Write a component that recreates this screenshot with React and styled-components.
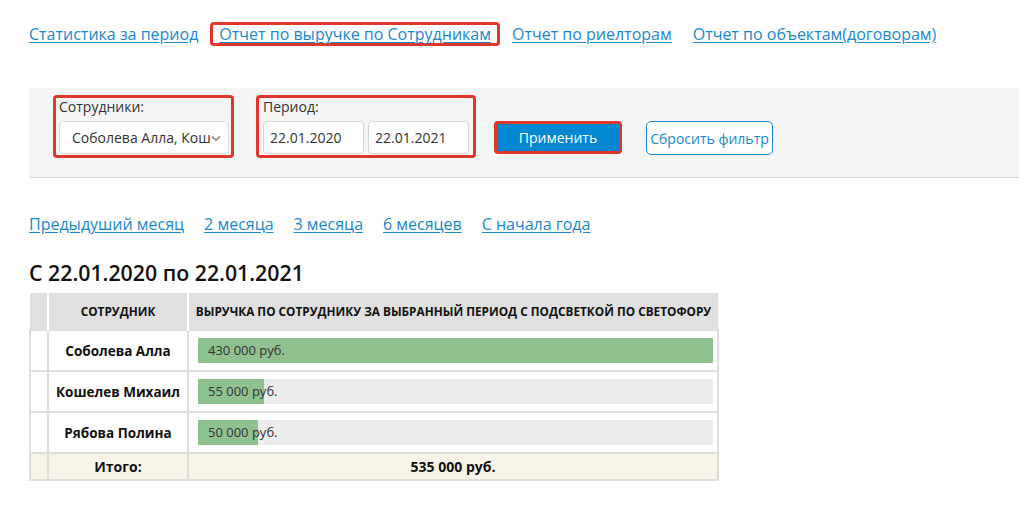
import React from "react";
import styled, { createGlobalStyle } from "styled-components";

const GlobalStyle = createGlobalStyle`
  html, body {
    margin: 0;
    padding: 0;
    background: #fff;
    font-family: "Open Sans", "Liberation Sans", sans-serif;
    color: #333;
  }
`;

const Page = styled.div`
  padding: 22px 0 0 29px;
`;

const TopNav = styled.nav`
  display: flex;
  align-items: center;
  gap: 21px;
  height: 24px;
  font-size: 16px;
`;

const NavLink = styled.a`
  color: #1c87cf;
  text-decoration: underline;
  text-underline-offset: 2px;
  white-space: nowrap;
  ${(p) =>
    p.$active &&
    `
    border: 3px solid #e0372c;
    border-radius: 4px;
    padding: 0 6px;
    margin: 0 -9px;
    line-height: 18px;
  `}
`;

const FilterPanel = styled.div`
  margin-top: 42px;
  background: #f5f5f5;
  border-bottom: 1px solid #dcdcdc;
  height: 90px;
  padding: 7px 0 0 24px;
  box-sizing: border-box;
  display: flex;
  align-items: flex-start;
`;

const Group = styled.div`
  border: 3px solid #e0372c;
  border-radius: 4px;
  padding: ${(p) => p.$pad || "0 2px 0 3px"};
  height: 63px;
  box-sizing: border-box;
  margin-right: ${(p) => p.$gap || 22}px;
`;

const Label = styled.div`
  font-size: 14px;
  color: #333;
  line-height: 18px;
  margin: 0 0 5px;
`;

const Fields = styled.div`
  display: flex;
  gap: 4px;
`;

const Field = styled.div`
  width: ${(p) => p.$w}px;
  height: 33px;
  box-sizing: border-box;
  background: #fff;
  border: 1px solid #d6d6d6;
  border-radius: 4px;
  display: flex;
  align-items: center;
  padding: 0 6px 0 ${(p) => p.$pl || 6}px;
  font-size: 14px;
  color: #333;
  overflow: hidden;
  white-space: nowrap;
`;

const SelectText = styled.span`
  flex: 1;
  overflow: hidden;
`;

const Buttons = styled.div`
  display: flex;
  gap: 24px;
  margin-top: 26px;
`;

const ApplyButton = styled.button`
  width: 128px;
  height: 33px;
  box-sizing: border-box;
  background: #0288d1;
  color: #fff;
  border: 3px solid #e0372c;
  border-radius: 4px;
  font-family: inherit;
  font-size: 14px;
`;

const ResetButton = styled.button`
  width: 127px;
  height: 34px;
  box-sizing: border-box;
  background: #fff;
  color: #1c87cf;
  border: 1px solid #1c87cf;
  border-radius: 5px;
  font-family: inherit;
  font-size: 14px;
  padding: 0;
  white-space: nowrap;
`;

const PeriodLinks = styled.div`
  display: flex;
  gap: 20px;
  margin-top: 35px;
  font-size: 16px;
`;

const Heading = styled.h2`
  margin: 23px 0 0;
  font-size: 21.3px;
  font-weight: 600;
  color: #111;
  line-height: 30px;
`;

const Table = styled.table`
  margin-top: 5px;
  border-collapse: collapse;
  width: 690px;
  table-layout: fixed;
`;

const Th = styled.th`
  background: #e0e0e0;
  height: 36px;
  padding: 0;
  border-left: 2px solid #fff;
  font-size: 11.8px;
  font-weight: 700;
  color: #111;
  text-transform: uppercase;
  white-space: nowrap;
  &:first-child {
    border-left: 0;
  }
`;

const Td = styled.td`
  border: 2px solid #dedede;
  height: ${(p) => (p.$total ? 25 : 39)}px;
  padding: ${(p) => (p.$bar ? "0 4px 0 9px" : "0")};
  background: ${(p) => (p.$total ? "#f8f4e8" : "#fff")};
  text-align: center;
  font-size: 14px;
  font-weight: ${(p) => (p.$bold ? 700 : 400)};
  color: #111;
  white-space: nowrap;
`;

const Name = styled(Td)`
  font-size: 13.5px;
`;

const Bar = styled.div`
  position: relative;
  height: 25px;
  background: #ececec;
  text-align: left;
`;

const Fill = styled.div`
  position: absolute;
  left: 0;
  top: 0;
  bottom: 0;
  background: #8fc18f;
`;

const BarText = styled.span`
  position: relative;
  line-height: 25px;
  padding-left: 10px;
  font-size: 13px;
  color: #333;
`;

const Chevron = () => (
  <svg width="12" height="12" viewBox="0 0 12 12">
    <path d="M2 4.5 L6 8 L10 4.5" fill="none" stroke="#999" strokeWidth="1.8" />
  </svg>
);

const rows = [
  { name: "Соболева Алла", sum: 430000 },
  { name: "Кошелев Михаил", sum: 55000 },
  { name: "Рябова Полина", sum: 50000 },
];

const fmt = (n) => n.toLocaleString("ru-RU").replace(/\s/g, " ") + " руб.";

export default function App() {
  const max = Math.max(...rows.map((r) => r.sum));
  const total = rows.reduce((a, r) => a + r.sum, 0);
  return (
    <>
      <GlobalStyle />
      <Page>
        <TopNav>
          <NavLink href="#">Статистика за период</NavLink>
          <NavLink href="#" $active>
            Отчет по выручке по Сотрудникам
          </NavLink>
          <NavLink href="#">Отчет по риелторам</NavLink>
          <NavLink href="#">Отчет по объектам(договорам)</NavLink>
        </TopNav>

        <FilterPanel>
          <Group>
            <Label>Сотрудники:</Label>
            <Field $w={170} $pl={12}>
              <SelectText>Соболева Алла, Кошелев Михаил</SelectText>
              <Chevron />
            </Field>
          </Group>
          <Group $gap={18} $pad="0 4px">
            <Label>Период:</Label>
            <Fields>
              <Field $w={101}>22.01.2020</Field>
              <Field $w={101}>22.01.2021</Field>
            </Fields>
          </Group>
          <Buttons>
            <ApplyButton>Применить</ApplyButton>
            <ResetButton>Сбросить фильтр</ResetButton>
          </Buttons>
        </FilterPanel>

        <PeriodLinks>
          <NavLink href="#">Предыдуший месяц</NavLink>
          <NavLink href="#">2 месяца</NavLink>
          <NavLink href="#">3 месяца</NavLink>
          <NavLink href="#">6 месяцев</NavLink>
          <NavLink href="#">С начала года</NavLink>
        </PeriodLinks>

        <Heading>С 22.01.2020 по 22.01.2021</Heading>

        <Table>
          <colgroup>
            <col style={{ width: 18 }} />
            <col style={{ width: 140 }} />
            <col />
          </colgroup>
          <thead>
            <tr>
              <Th />
              <Th>Сотрудник</Th>
              <Th>Выручка по сотруднику за выбранный период с подсветкой по светофору</Th>
            </tr>
          </thead>
          <tbody>
            {rows.map((r) => (
              <tr key={r.name}>
                <Td />
                <Name $bold>{r.name}</Name>
                <Td $bar>
                  <Bar>
                    <Fill style={{ width: `${(r.sum / max) * 100}%` }} />
                    <BarText>{fmt(r.sum)}</BarText>
                  </Bar>
                </Td>
              </tr>
            ))}
            <tr>
              <Td $total />
              <Td $total $bold>Итого:</Td>
              <Td $total $bold>{fmt(total)}</Td>
            </tr>
          </tbody>
        </Table>
      </Page>
    </>
  );
}
